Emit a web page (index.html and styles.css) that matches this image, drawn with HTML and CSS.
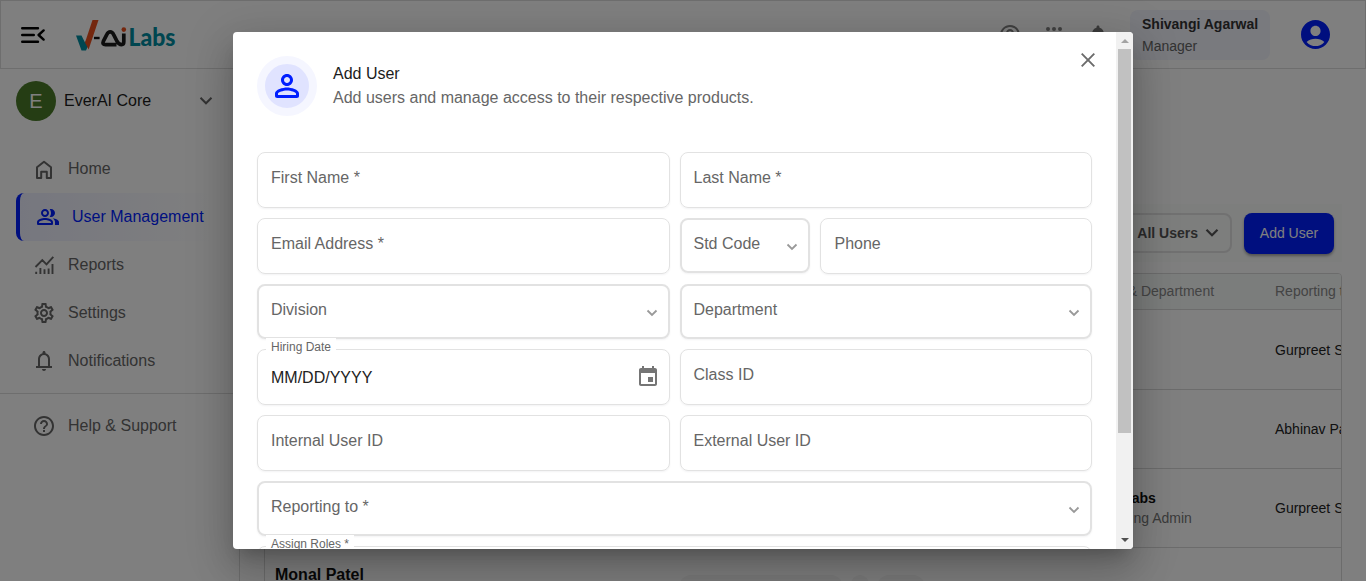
FILE: index.html
```html
<!DOCTYPE html>
<html lang="en">
<head>
<meta charset="utf-8">
<title>User Management</title>
<link rel="stylesheet" href="styles.css">
</head>
<body>
<div class="app">
  <header class="topbar">
    <svg class="menu-toggle" viewBox="0 0 24 18" fill="none" stroke="#000" stroke-width="2.4" stroke-linecap="round" stroke-linejoin="round"><path d="M1.200 2.200h15.800M1.200 9h11.600M1.200 15.800h15.800M22.600 4.400 17.600 9l5 4.600"/></svg>
    <svg class="logo" viewBox="0 0 102 34">
      <path d="M1 17.500h5.500l3.500 7 1.500-2.500 2 5-2.500 5.500H6.500z" fill="#008ca0"/>
      <path d="M17.500 2h6L13.600 31.500 10 24.500z" fill="#e84e1c"/>
      <path d="M19 20h5.600" stroke="#111" stroke-width="2.400"/>
      <path d="M41.500 26.600H30.500c-2.400 0-3-1.400-2.200-3.200l3.600-7c1.600-3.300 5-3.300 6.600 0l3.300 6.400c1.400 2.800 3 3.800 4.800 3.800 1.700 0 2.200-1.200 2.200-2.800V15.500" fill="none" stroke="#1b1b1b" stroke-width="3.700" stroke-linejoin="round"/>
      <circle cx="48.800" cy="11.600" r="2.300" fill="#e84e1c"/>
      <text x="53.500" y="28" class="logo-text" textLength="47" lengthAdjust="spacingAndGlyphs">Labs</text>
    </svg>
    <div class="top-actions">
      <svg viewBox="0 0 24 24" fill="#808080"><path d="M11 18h2v-2h-2v2zm1-16C6.480 2 2 6.480 2 12s4.480 10 10 10 10-4.480 10-10S17.520 2 12 2zm0 18c-4.410 0-8-3.590-8-8s3.590-8 8-8 8 3.590 8 8-3.590 8-8 8zm0-14c-2.210 0-4 1.790-4 4h2c0-1.100.9-2 2-2s2 .9 2 2c0 2-3 1.750-3 5h2c0-2.250 3-2.500 3-5 0-2.210-1.790-4-4-4z"/></svg>
      <svg viewBox="0 0 24 24" fill="#808080"><circle cx="6" cy="6" r="2"/><circle cx="12" cy="6" r="2"/><circle cx="18" cy="6" r="2"/><circle cx="6" cy="12" r="2"/><circle cx="12" cy="12" r="2"/><circle cx="18" cy="12" r="2"/><circle cx="6" cy="18" r="2"/><circle cx="12" cy="18" r="2"/><circle cx="18" cy="18" r="2"/></svg>
      <svg viewBox="0 0 24 24" fill="#757575"><path d="M12 22c1.100 0 2-.9 2-2h-4c0 1.100.9 2 2 2zm6-6v-5c0-3.070-1.630-5.640-4.500-6.320V4c0-.83-.67-1.500-1.500-1.500s-1.500.67-1.500 1.500v.68C7.640 5.360 6 7.920 6 11v5l-2 2v1h16v-1l-2-2z"/></svg>
    </div>
    <div class="profile"><strong>Shivangi Agarwal</strong><span>Manager</span></div>
    <svg class="account" viewBox="2 2 20 20" fill="#001eff"><path d="M12 2C6.480 2 2 6.480 2 12s4.480 10 10 10 10-4.480 10-10S17.520 2 12 2zm0 4c1.930 0 3.500 1.570 3.500 3.500S13.930 13 12 13s-3.500-1.570-3.500-3.500S10.070 6 12 6zm0 14c-2.030 0-4.430-.82-6.140-2.880C7.550 15.800 9.680 15 12 15s4.450.8 6.140 2.120C16.430 19.180 14.030 20 12 20z"/></svg>
  </header>
  <div class="body">
    <nav class="sidebar">
      <div class="org">
        <span class="org-avatar">E</span><span class="org-name">EverAI Core</span>
        <svg class="org-arrow" viewBox="0 0 14 10" fill="none" stroke="#666" stroke-width="2"><path d="m1.500 1.800 5.500 5.500 5.500-5.500"/></svg>
      </div>
      <a class="item"><svg viewBox="0 0 24 24" fill="none" stroke="currentColor" stroke-width="2" stroke-linejoin="round"><path d="M5 10.300 12 4.800l7 5.500V21h-4.200v-6.300H9.200V21H5z"/></svg>Home</a>
      <a class="item active"><svg viewBox="0 0 24 24" fill="currentColor"><path d="M16.670 13.130C18.040 14.060 19 15.320 19 17v3h4v-3c0-2.180-3.570-3.470-6.330-3.870zM15 12c2.210 0 4-1.790 4-4s-1.790-4-4-4c-.47 0-.91.100-1.330.24C14.500 5.270 15 6.580 15 8s-.5 2.730-1.330 3.760c.42.14.86.24 1.330.24zM9 12c2.210 0 4-1.790 4-4s-1.790-4-4-4-4 1.790-4 4 1.790 4 4 4zm0-6c1.100 0 2 .9 2 2s-.9 2-2 2-2-.9-2-2 .9-2 2-2zm0 7c-2.670 0-8 1.340-8 4v1.500c0 1 .5 1.500 1.500 1.500h13c1 0 1.500-.5 1.500-1.500V17c0-2.660-5.330-4-8-4zm6 5H3v-.99C3.200 16.290 6.300 15 9 15s5.800 1.290 6 2z"/></svg>User Management</a>
      <a class="item"><svg viewBox="0 0 24 24" fill="none" stroke="currentColor" stroke-width="1.900"><path d="m3.500 14 6.800-6.800 4.200 4.200 6.800-7.600M4.200 21v-2.200M8.400 21v-6M12.500 21v-4.800M16.600 21v-5.500M20.500 21V11"/></svg>Reports</a>
      <a class="item"><svg viewBox="0 0 24 24" fill="currentColor"><path d="M19.430 12.980c.04-.32.07-.64.07-.98s-.03-.66-.07-.98l2.110-1.650c.19-.15.24-.42.12-.64l-2-3.460c-.09-.16-.26-.25-.44-.25-.06 0-.12.010-.17.030l-2.490 1c-.52-.4-1.080-.73-1.690-.98l-.38-2.650C14.460 2.180 14.250 2 14 2h-4c-.25 0-.46.18-.49.42l-.38 2.650c-.61.25-1.170.59-1.690.98l-2.490-1c-.06-.02-.12-.03-.18-.03-.17 0-.34.090-.43.250l-2 3.460c-.13.22-.07.49.12.64l2.110 1.650c-.04.32-.07.65-.07.98s.03.66.07.98l-2.110 1.650c-.19.15-.24.42-.12.64l2 3.460c.09.16.26.25.44.25.06 0 .12-.01.17-.03l2.490-1c.52.4 1.080.73 1.690.98l.38 2.650c.03.24.24.42.49.42h4c.25 0 .46-.18.49-.42l.38-2.650c.61-.25 1.170-.59 1.690-.98l2.490 1c.06.02.12.03.18.03.17 0 .34-.09.43-.25l2-3.460c.12-.22.07-.49-.12-.64l-2.110-1.650zm-1.980-1.710c.04.31.05.52.05.73s-.02.43-.05.73l-.14 1.130.89.7 1.080.84-.7 1.210-1.270-.51-1.040-.42-.9.68c-.43.32-.84.56-1.250.73l-1.060.43-.16 1.130-.2 1.350h-1.400l-.19-1.350-.16-1.130-1.060-.43c-.43-.18-.83-.41-1.230-.71l-.91-.7-1.060.43-1.270.51-.7-1.210 1.080-.84.89-.7-.14-1.130c-.03-.31-.05-.54-.05-.74s.02-.43.05-.73l.14-1.130-.89-.7-1.080-.84.7-1.210 1.270.51 1.040.42.9-.68c.43-.32.84-.56 1.250-.73l1.060-.43.16-1.130.2-1.350h1.390l.19 1.350.16 1.130 1.060.43c.43.18.83.41 1.230.71l.91.7 1.060-.43 1.270-.51.7 1.210-1.070.85-.89.7.14 1.130zM12 8c-2.210 0-4 1.790-4 4s1.790 4 4 4 4-1.790 4-4-1.790-4-4-4zm0 6c-1.100 0-2-.9-2-2s.9-2 2-2 2 .9 2 2-.9 2-2 2z"/></svg>Settings</a>
      <a class="item"><svg viewBox="0 0 24 24" fill="currentColor"><path d="M10 20h4c0 1.100-.9 2-2 2s-2-.9-2-2zm10-3v2H4v-2h2v-7c0-2.790 1.910-5.140 4.500-5.800v-.7C10.500 2.670 11.170 2 12 2s1.500.67 1.500 1.500v.7c2.590.66 4.500 3.010 4.500 5.800v7zM8 17h8v-7c0-2.210-1.790-4-4-4s-4 1.790-4 4z"/></svg>Notifications</a>
      <div class="rule"></div>
      <a class="item"><svg viewBox="0 0 24 24" fill="currentColor"><path d="M11 18h2v-2h-2v2zm1-16C6.480 2 2 6.480 2 12s4.480 10 10 10 10-4.480 10-10S17.520 2 12 2zm0 18c-4.410 0-8-3.590-8-8s3.590-8 8-8 8 3.590 8 8-3.590 8-8 8zm0-14c-2.210 0-4 1.790-4 4h2c0-1.100.9-2 2-2s2 .9 2 2c0 2-3 1.750-3 5h2c0-2.250 3-2.500 3-5 0-2.210-1.790-4-4-4z"/></svg>Help &amp; Support</a>
    </nav>
    <main class="content">
      <div class="toolbar">
        <div class="filter">All Users<svg viewBox="0 0 14 10" fill="none" stroke="#555" stroke-width="2.200"><path d="m1.500 1.800 5.500 5.500 5.500-5.500"/></svg></div>
        <button class="add">Add User</button>
      </div>
      <div class="table">
        <div class="row head"><div></div><div></div><div>Role &amp; Department</div><div>Reporting to</div></div>
        <div class="row first"><div></div><div></div><div></div><div>Gurpreet Singh</div></div>
        <div class="row"><div></div><div></div><div></div><div>Abhinav Patel</div></div>
        <div class="row"><div></div><div></div><div class="role"><strong>V-Ai Labs</strong><span>Training Admin</span></div><div>Gurpreet Singh</div></div>
        <div class="row last"><div class="person">Monal Patel</div><div class="chips"><i class="chip wide"></i><i class="chip dot"></i><i class="chip"></i></div><div></div><div></div></div>
      </div>
    </main>
  </div>
</div>

<div class="backdrop">
  <section class="dialog">
    <div class="dialog-body">
      <div class="dialog-head">
        <span class="badge"><svg viewBox="4 4 16 16" fill="#001eff"><path d="M12 6c1.100 0 2 .9 2 2s-.9 2-2 2-2-.9-2-2 .9-2 2-2m0-2C9.790 4 8 5.790 8 8s1.790 4 4 4 4-1.790 4-4-1.790-4-4-4zm0 11c2.700 0 5.800 1.290 6 2v1H6v-.99c.2-.72 3.300-2.010 6-2.010m0-2c-2.670 0-8 1.340-8 4v1.500c0 1 .5 1.500 1.500 1.500h13c1 0 1.500-.5 1.500-1.500V17c0-2.660-5.330-4-8-4z"/></svg></span>
        <div class="titles"><h1>Add User</h1><p>Add users and manage access to their respective products.</p></div>
        <svg class="close" viewBox="0 0 14 14" stroke="#6b6b6b" stroke-width="1.900"><path d="m.7.7 12.600 12.600M13.300.7.7 13.300"/></svg>
      </div>
      <form class="fields">
        <div class="field">First Name *</div>
        <div class="field">Last Name *</div>
        <div class="field">Email Address *</div>
        <div class="pair">
          <div class="field select">Std Code<svg viewBox="0 0 12 8"><path d="m1.500 1.500 4.500 4.500 4.500-4.500"/></svg></div>
          <div class="field phone">Phone</div>
        </div>
        <div class="field select">Division<svg viewBox="0 0 12 8"><path d="m1.500 1.500 4.500 4.500 4.500-4.500"/></svg></div>
        <div class="field select">Department<svg viewBox="0 0 12 8"><path d="m1.500 1.500 4.500 4.500 4.500-4.500"/></svg></div>
        <div class="field date"><span class="label">Hiring Date</span><span class="value">MM/DD/YYYY</span>
          <svg class="calendar" viewBox="3 1 18 20" fill="#757575"><path d="M19 3h-1V1h-2v2H8V1H6v2H5c-1.110 0-2 .9-2 2v14c0 1.100.89 2 2 2h14c1.100 0 2-.9 2-2V5c0-1.100-.9-2-2-2zm0 16H5V8h14v11zM12 12h5v5h-5z"/></svg></div>
        <div class="field">Class ID</div>
        <div class="field">Internal User ID</div>
        <div class="field">External User ID</div>
        <div class="field select full">Reporting to *<svg viewBox="0 0 12 8"><path d="m1.500 1.500 4.500 4.500 4.500-4.500"/></svg></div>
        <div class="field full"><span class="label">Assign Roles *</span></div>
      </form>
    </div>
    <div class="scrollbar"><i class="up"></i><i class="thumb"></i><i class="down"></i></div>
  </section>
</div>
</body>
</html>
```
FILE: styles.css
```css
* { box-sizing: border-box; }
body {
  margin: 0;
  height: 581px;
  overflow: hidden;
  background: #fff;
  font: 16px/24px "Liberation Sans", Arial, sans-serif;
  color: #666;
}
svg { flex: none; display: block; }

.app { height: 581px; overflow: hidden; }
.topbar {
  display: flex;
  align-items: center;
  height: 69px;
  padding: 0 35px 0 20px;
  border: 1px solid #dcdcdc;
}
.menu-toggle { width: 24px; height: 18px; }
.logo { width: 102px; height: 34px; margin-left: 30px; overflow: visible; }
.logo-text { font: 900 24.5px/1 Lato, sans-serif; fill: #008ca0; }
.top-actions { display: flex; gap: 20px; margin-left: auto; }
.top-actions svg { width: 24px; height: 24px; }
.profile {
  display: flex;
  flex-direction: column;
  width: 140px;
  height: 50px;
  margin: 0 31px 0 20px;
  padding: 3px 12px;
  border-radius: 8px;
  background: #f2f4fc;
  font-size: 14px;
  line-height: 22px;
  white-space: nowrap;
}
.profile strong { color: #333; }
.account { width: 29px; height: 29px; }

.body { display: flex; height: 512px; }
.sidebar { width: 240px; flex: none; border-right: 1px solid #dcdcdc; }
.org { display: flex; align-items: center; height: 64px; padding: 0 26px 0 16px; margin-bottom: 12px; }
.org-avatar {
  width: 40px;
  height: 40px;
  border-radius: 50%;
  background: #4a7a28;
  color: #fff;
  font-size: 20px;
  line-height: 40px;
  text-align: center;
}
.org-name { margin-left: 8px; color: #1c1c1c; }
.org-arrow { width: 14px; height: 10px; margin-left: auto; }
.item {
  display: flex;
  align-items: center;
  gap: 12px;
  height: 48px;
  margin-left: 16px;
  padding-left: 16px;
  color: #666;
}
.item svg { width: 24px; height: 24px; }
.item.active {
  color: #001eff;
  border-left: 4px solid #001eff;
  border-radius: 8px 0 0 8px;
  background: linear-gradient(90deg, #edefff, #fff 92%);
}
.rule { height: 1px; margin: 8px 0; background: #dcdcdc; }

.content { flex: 1; min-width: 0; padding: 135px 24px 0 24px; }
.toolbar {
  display: flex;
  align-items: center;
  justify-content: flex-end;
  gap: 12px;
  height: 58px;
  padding-right: 8px;
  margin-bottom: 11px;
  background: #fafcfb;
}
.filter {
  display: flex;
  align-items: center;
  gap: 7px;
  height: 40px;
  padding: 0 11px;
  border: 2px solid #e2e2e2;
  border-radius: 8px;
  font-size: 14px;
  font-weight: 700;
  color: #555;
}
.filter svg { width: 14px; height: 10px; }
.add {
  width: 90px;
  height: 41px;
  padding: 0;
  border: 0;
  border-radius: 8px;
  background: #001eff;
  color: #fff;
  font: 14px "Liberation Sans", Arial, sans-serif;
  box-shadow: 0 2px 3px rgba(0, 0, 0, .35);
}
.table {
  width: 1078px;
  height: 400px;
  overflow: hidden;
  border: 1px solid #d8d8d8;
  border-radius: 4px;
  font-size: 14px;
  color: #222;
}
.row {
  display: grid;
  grid-template-columns: 414px 416px 180px 200px;
  align-items: center;
  height: 79px;
  border-bottom: 1px solid #d8d8d8;
  line-height: 20px;
  white-space: nowrap;
}
.row.head { height: 36px; padding-bottom: 1px; background: #f7faf9; color: #888; }
.row.first { height: 80px; }
.row strong { display: block; margin-left: -3px; color: #111; }
.row span { display: block; margin-left: 4px; color: #777; }
.row.last { align-items: start; }
.person { padding: 17px 0 0 10px; font-size: 16px; font-weight: 700; color: #111; }
.chips { display: flex; gap: 8px; padding-top: 27px; }
.chip { width: 48px; height: 24px; border-radius: 12px; background: #f4f4f4; }
.chip.wide { width: 164px; }
.chip.dot { width: 18px; }

.backdrop {
  position: absolute;
  inset: 0;
  display: flex;
  align-items: center;
  justify-content: center;
  background: rgba(0, 0, 0, .5);
}
.dialog {
  display: flex;
  width: 900px;
  height: 517px;
  overflow: hidden;
  border-radius: 4px;
  background: #fff;
  box-shadow: 0 11px 15px -7px rgba(0, 0, 0, .2), 0 24px 38px 3px rgba(0, 0, 0, .14), 0 9px 46px 8px rgba(0, 0, 0, .12);
}
.dialog-body { flex: 1; height: 517px; overflow: hidden; padding: 24px 24px 0; }
.dialog-head { display: flex; height: 96px; }
.badge {
  display: flex;
  align-items: center;
  justify-content: center;
  width: 60px;
  height: 60px;
  border: 8px solid #f5f6ff;
  border-radius: 50%;
  background: #e0e3ff;
}
.badge svg { width: 24px; height: 24px; }
.titles { margin: 6px 0 0 16px; }
h1, p { margin: 0; font-size: 16px; font-weight: 400; line-height: 24px; }
h1 { color: #1c1c1c; }
.close { width: 14px; height: 14px; margin: -3px -3px 0 auto; }
.fields { display: grid; grid-template-columns: 1fr 1fr; gap: 10px; align-items: start; }
.pair { display: grid; grid-template-columns: 130px 1fr; gap: 10px; align-items: start; }
.field {
  position: relative;
  display: flex;
  justify-content: space-between;
  height: 56px;
  padding: 13px 13px 11px;
  border: 1px solid #e2e2e2;
  border-radius: 8px;
  box-shadow: 0 1px 2px rgba(16, 24, 40, .05);
}
.phone { padding-left: 14px; }
.select { height: 55px; padding: 12px 11px 10px 12px; border-width: 2px; }
.select svg { width: 12px; height: 8px; margin: 11px -1px 0 0; fill: none; stroke: #999; stroke-width: 1.8; }
.full { grid-column: 1 / -1; }
.label {
  position: absolute;
  top: -12px;
  left: 8px;
  padding: 0 5px;
  background: #fff;
  font-size: 12px;
  line-height: 18px;
}
.value { padding-top: 3px; color: #222; }
.calendar { width: 18px; height: 20px; margin: 3px -1px 0 0; }

.scrollbar { display: flex; flex-direction: column; align-items: center; width: 17px; background: #f1f1f1; }
.up, .down { border: 4px solid transparent; }
.up { height: 4px; margin: 7px 0 6px; border-top: 0; border-bottom-color: #a3a3a3; }
.thumb { width: 13px; height: 384px; background: #c1c1c1; }
.down { height: 4px; margin: auto 0 7px; border-bottom: 0; border-top-color: #505050; }
```
